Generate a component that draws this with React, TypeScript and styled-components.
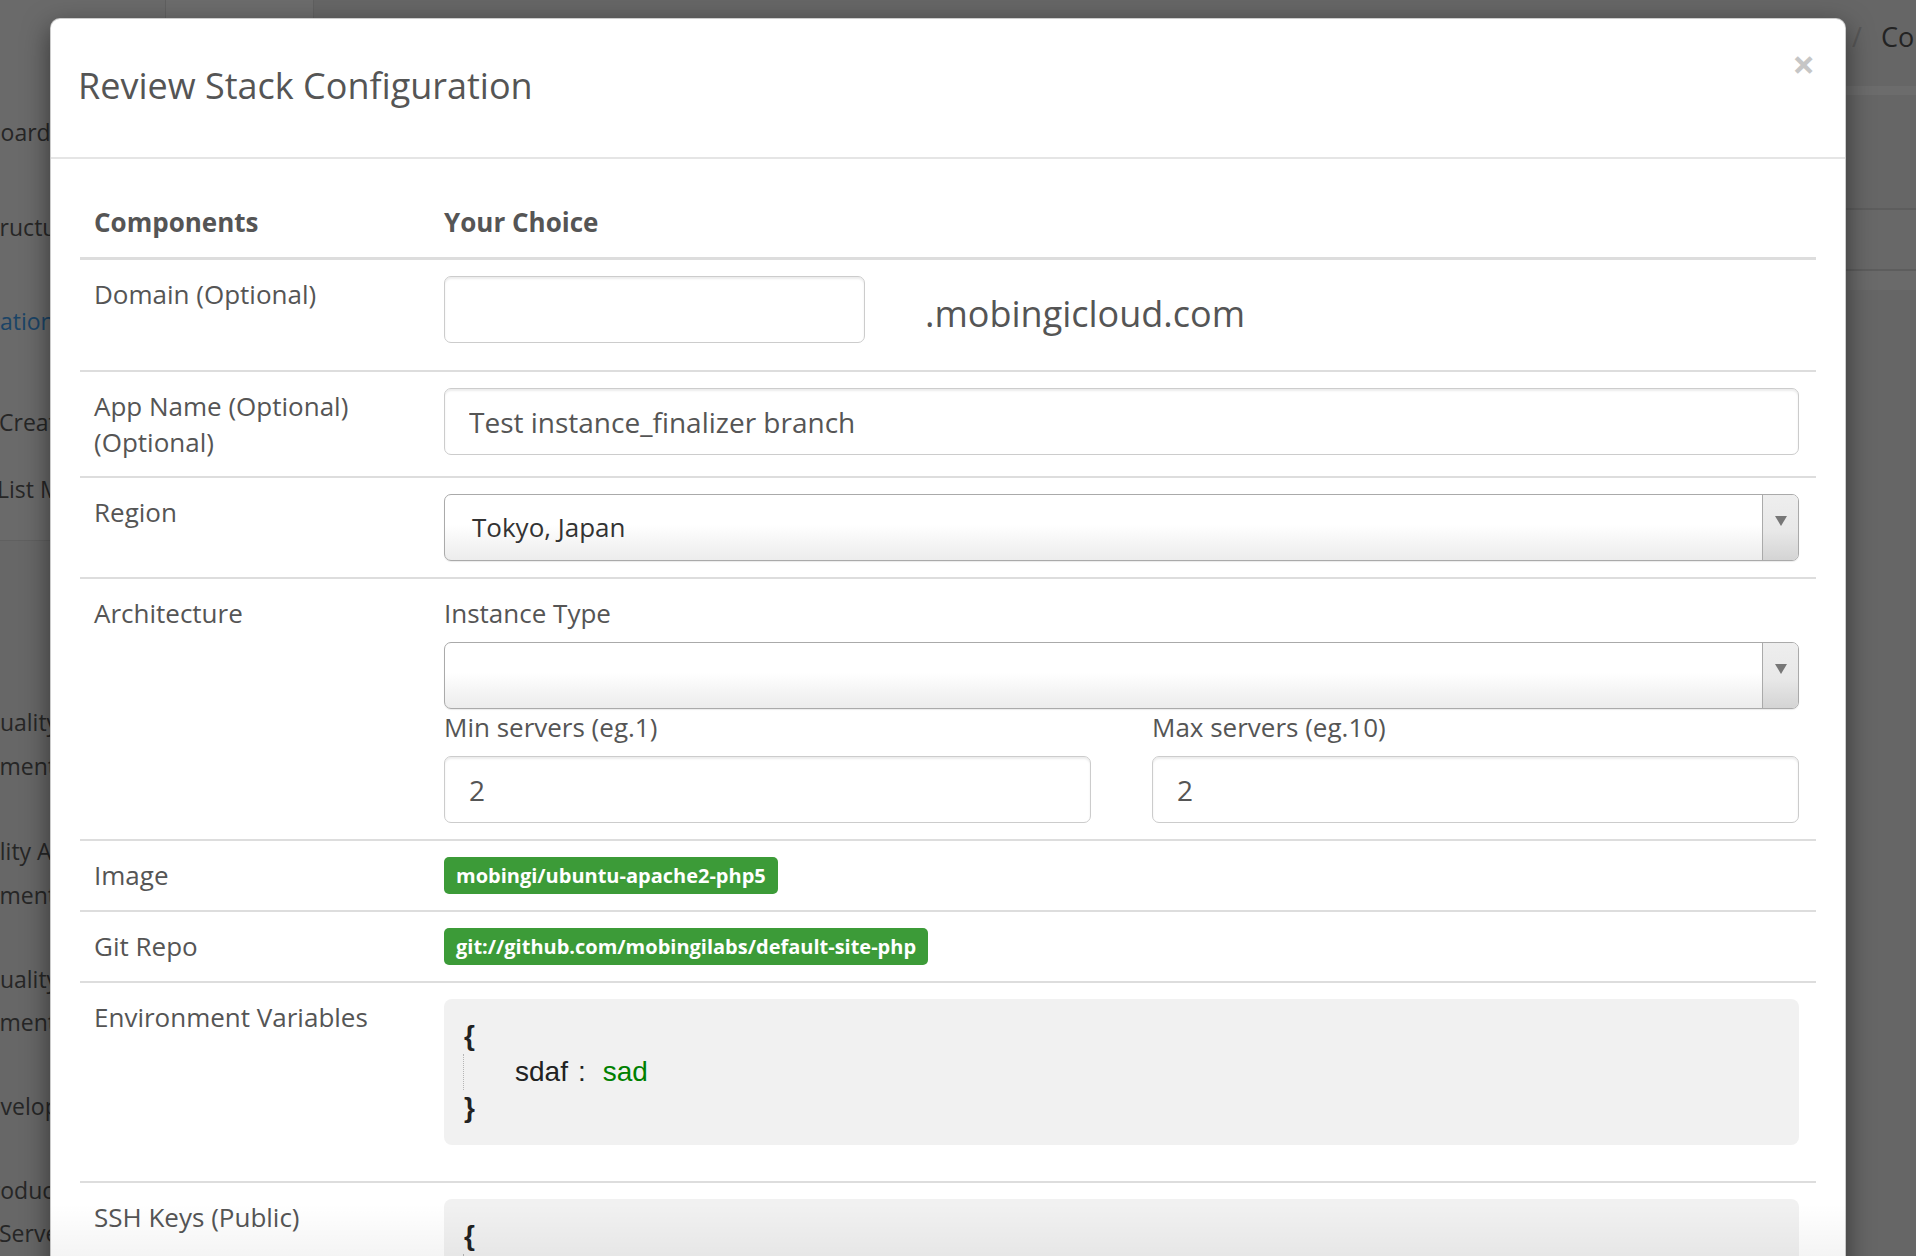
import React from "react";
import styled, { createGlobalStyle } from "styled-components";

const GlobalStyle = createGlobalStyle`
  html, body {
    margin: 0;
    padding: 0;
  }
  body {
    width: 1916px;
    height: 1256px;
    overflow: hidden;
    background: #666;
    font-family: "Open Sans", "Liberation Sans", sans-serif;
  }
  * {
    box-sizing: border-box;
  }
`;

// ---- page behind the backdrop ----

const Page = styled.div`
  position: relative;
  width: 1916px;
  height: 1256px;
  overflow: hidden;
  display: flex;
  flex-direction: column;
  background: #666;
`;

const TopBar = styled.header`
  display: flex;
  height: 86px;
  flex-shrink: 0;
`;

const Brand = styled.div`
  width: 166px;
  background: #6a6a6a;
  border-right: 1px solid #606060;
`;

const TopTab = styled.div`
  width: 148px;
  background: #6c6c6c;
  border-right: 1px solid #606060;
`;

const Crumbs = styled.div`
  margin-left: auto;
  width: 64px;
  white-space: nowrap;
  overflow: hidden;
  font-size: 27px;
  line-height: 38px;
  padding-top: 18px;
  color: #232323;
`;

const CrumbSep = styled.span`
  color: #575757;
  margin-right: 19px;
`;

const Shell = styled.div`
  display: flex;
  flex: 1;
`;

const Sidebar = styled.nav`
  width: 166px;
  display: flex;
  flex-direction: column;
  overflow: hidden;
`;

const NavGroup = styled.div<{ $h?: number; $bg: string }>`
  display: flex;
  flex-direction: column;
  height: ${(p) => (p.$h ? `${p.$h}px` : "auto")};
  flex: ${(p) => (p.$h ? "none" : 1)};
  background: ${(p) => p.$bg};
  border-bottom: ${(p) => (p.$h ? "1px solid #606060" : "none")};
`;

const NavLine = styled.div<{ $gap: number; $shift: number; $active?: boolean }>`
  margin-top: ${(p) => p.$gap}px;
  margin-left: ${(p) => p.$shift}px;
  white-space: nowrap;
  font-size: 23px;
  line-height: 36px;
  color: ${(p) => (p.$active ? "#1b4466" : "#262626")};
`;

const Main = styled.main`
  flex: 1;
  display: flex;
  flex-direction: column;
`;

const SubBar = styled.div`
  height: 9px;
  background: #6c6c6c;
`;

const MainGap = styled.div`
  height: 113px;
`;

const PanelHead = styled.div`
  height: 63px;
  border-top: 2px solid #5d5d5d;
  border-bottom: 2px solid #5d5d5d;
  background: #686868;
`;

const PanelStrip = styled.div`
  height: 19px;
  background: #6a6a6a;
`;

// ---- modal ----

const ModalLayer = styled.div`
  position: absolute;
  inset: 0;
  padding: 18px 70px 0 50px;
  overflow: hidden;
`;

const Modal = styled.div`
  background: #fff;
  border: 1px solid rgba(0, 0, 0, 0.2);
  border-radius: 10px;
  box-shadow: 0 9px 27px rgba(0, 0, 0, 0.5);
`;

const Header = styled.div`
  display: flex;
  align-items: flex-start;
  justify-content: space-between;
  padding: 42px 30px 46px 27px;
  border-bottom: 2px solid #e5e5e5;
`;

const Title = styled.h4`
  margin: 0;
  font-size: 36px;
  font-weight: 400;
  line-height: 50px;
  color: #555;
`;

const Close = styled.button`
  margin-top: -17px;
  padding: 0;
  border: 0;
  background: none;
  font-family: "Open Sans", sans-serif;
  font-size: 40px;
  font-weight: 700;
  line-height: 40px;
  color: #c6c6c6;
  cursor: pointer;
`;

const Body = styled.div`
  padding: 31px 29px 0 29px;
`;

const Table = styled.table`
  width: 100%;
  border-collapse: collapse;
  table-layout: fixed;
`;

const Th = styled.th<{ $w?: number }>`
  width: ${(p) => (p.$w ? `${p.$w}px` : "auto")};
  text-align: left;
  font-size: 26px;
  font-weight: 700;
  line-height: 36px;
  color: #555;
  padding: 14px 17px 17px 14px;
  border-bottom: 3px solid #ddd;
  vertical-align: bottom;
`;

const Td = styled.td`
  padding: 16px 17px 16px 14px;
  border-top: 2px solid #ddd;
  vertical-align: top;
  font-size: 26px;
  line-height: 36px;
  color: #555;
`;

const DomainRow = styled.div`
  display: flex;
  align-items: flex-start;
  gap: 60px;
  height: 78px;
`;

const DomainSuffix = styled.span`
  margin-top: 19px;
  font-size: 36px;
  line-height: 38px;
  color: #555;
`;

const TextInput = styled.input<{ $w?: number }>`
  display: block;
  width: ${(p) => (p.$w ? `${p.$w}px` : "100%")};
  height: 67px;
  padding: 0 24px;
  border: 1.5px solid #ccc;
  border-radius: 7px;
  box-shadow: inset 0 2px 2px rgba(0, 0, 0, 0.075);
  background: #fff;
  font-family: "Open Sans", sans-serif;
  font-size: 28px;
  color: #555;
  outline: none;
`;

const Select = styled.div`
  display: flex;
  height: 67px;
  border: 1.5px solid #aaa;
  border-radius: 7px;
  overflow: hidden;
  background: linear-gradient(to bottom, #fff 0%, #fff 45%, #ececec 100%);
  box-shadow: 0 1px 1px rgba(0, 0, 0, 0.08);
`;

const SelectValue = styled.span`
  flex: 1;
  padding-left: 27px;
  font-size: 26px;
  line-height: 64px;
  color: #333;
`;

const SelectArrow = styled.span`
  width: 36px;
  display: flex;
  justify-content: center;
  padding-top: 21px;
  border-left: 1.5px solid #aaa;
  background: linear-gradient(to bottom, #eee 0%, #e8e8e8 55%, #d4d4d4 100%);

  &::after {
    content: "";
    width: 0;
    height: 0;
    border-top: 10px solid #777;
    border-left: 6px solid transparent;
    border-right: 6px solid transparent;
  }
`;

const FieldLabel = styled.div`
  font-size: 26px;
  line-height: 36px;
  color: #555;
  margin-bottom: 11px;
`;

const ServerGrid = styled.div`
  display: grid;
  grid-template-columns: 1fr 1fr;
  column-gap: 61px;
`;

const Tag = styled.span`
  display: inline-block;
  vertical-align: top;
  padding: 6px 12px;
  border-radius: 5px;
  background: #3c9b38;
  color: #fff;
  font-size: 20px;
  font-weight: 700;
  line-height: 25px;
`;

const JsonBox = styled.div`
  background: #f1f1f1;
  border-radius: 8px;
  padding: 19px 20px;
  margin-bottom: 20px;
  font-family: "Liberation Sans", Arial, sans-serif;
  font-size: 28px;
  line-height: 36px;
  color: #222;
`;

const Brace = styled.div`
  font-weight: 700;
`;

const JsonEntries = styled.div`
  margin-left: -1px;
  padding-left: 51px;
  border-left: 1px dotted #b5b5b5;
`;

const JsonColon = styled.span`
  margin: 0 17px 0 10px;
`;

const JsonValue = styled.span`
  color: #008000;
`;

const BottomFade = styled.div`
  position: absolute;
  left: 50px;
  right: 70px;
  bottom: 0;
  height: 52px;
  background: linear-gradient(to bottom, rgba(0, 0, 0, 0), rgba(0, 0, 0, 0.045));
  pointer-events: none;
`;

const navTop = [
  { text: "Dashboard", gap: 28, shift: -68 },
  { text: "Infrastructure", gap: 59, shift: -70 },
  { text: "Configuration", gap: 58, shift: -92, active: true },
  { text: "Create Stack", gap: 65, shift: -1 },
  { text: "List Machines", gap: 31, shift: -3 },
];

const navBottom = [
  { text: "Quality Assurance", gap: 163, shift: -18 },
  { text: "Environment", gap: 8, shift: -82 },
  { text: "Quality Assurance", gap: 49, shift: -45 },
  { text: "Environment", gap: 8, shift: -82 },
  { text: "Quality Assurance", gap: 48, shift: -18 },
  { text: "Environment", gap: 7, shift: -82 },
  { text: "Development", gap: 48, shift: -29 },
  { text: "Production", gap: 48, shift: -23 },
  { text: "Server", gap: 7, shift: -1 },
];

type Entry = { key: string; value: string };

const JsonView = ({ entries }: { entries: Entry[] }) => (
  <JsonBox>
    <Brace>{"{"}</Brace>
    <JsonEntries>
      {entries.map((e) => (
        <div key={e.key}>
          {e.key}
          <JsonColon>:</JsonColon>
          <JsonValue>{e.value}</JsonValue>
        </div>
      ))}
    </JsonEntries>
    <Brace>{"}"}</Brace>
  </JsonBox>
);

const App = () => {
  return (
    <>
      <GlobalStyle />
      <Page>
        <TopBar>
          <Brand />
          <TopTab />
          <Crumbs>
            <CrumbSep>/</CrumbSep>Configuration
          </Crumbs>
        </TopBar>
        <Shell>
          <Sidebar>
            <NavGroup $h={455} $bg="#6a6a6a">
              {navTop.map((n) => (
                <NavLine key={n.text} $gap={n.gap} $shift={n.shift} $active={n.active}>
                  {n.text}
                </NavLine>
              ))}
            </NavGroup>
            <NavGroup $bg="#676767">
              {navBottom.map((n, i) => (
                <NavLine key={i} $gap={n.gap} $shift={n.shift}>
                  {n.text}
                </NavLine>
              ))}
            </NavGroup>
          </Sidebar>
          <Main>
            <SubBar />
            <MainGap />
            <PanelHead />
            <PanelStrip />
          </Main>
        </Shell>

        <ModalLayer>
          <Modal>
            <Header>
              <Title>Review Stack Configuration</Title>
              <Close aria-label="Close">×</Close>
            </Header>
            <Body>
              <Table>
                <thead>
                  <tr>
                    <Th $w={350}>Components</Th>
                    <Th>Your Choice</Th>
                  </tr>
                </thead>
                <tbody>
                  <tr>
                    <Td>Domain (Optional)</Td>
                    <Td>
                      <DomainRow>
                        <TextInput $w={421} defaultValue="" />
                        <DomainSuffix>.mobingicloud.com</DomainSuffix>
                      </DomainRow>
                    </Td>
                  </tr>
                  <tr>
                    <Td>App Name (Optional) (Optional)</Td>
                    <Td>
                      <TextInput defaultValue="Test instance_finalizer branch" />
                    </Td>
                  </tr>
                  <tr>
                    <Td>Region</Td>
                    <Td>
                      <Select>
                        <SelectValue>Tokyo, Japan</SelectValue>
                        <SelectArrow />
                      </Select>
                    </Td>
                  </tr>
                  <tr>
                    <Td>Architecture</Td>
                    <Td>
                      <FieldLabel>Instance Type</FieldLabel>
                      <Select>
                        <SelectValue />
                        <SelectArrow />
                      </Select>
                      <ServerGrid>
                        <div>
                          <FieldLabel>Min servers (eg.1)</FieldLabel>
                          <TextInput defaultValue="2" />
                        </div>
                        <div>
                          <FieldLabel>Max servers (eg.10)</FieldLabel>
                          <TextInput defaultValue="2" />
                        </div>
                      </ServerGrid>
                    </Td>
                  </tr>
                  <tr>
                    <Td>Image</Td>
                    <Td>
                      <Tag>mobingi/ubuntu-apache2-php5</Tag>
                    </Td>
                  </tr>
                  <tr>
                    <Td>Git Repo</Td>
                    <Td>
                      <Tag>git://github.com/mobingilabs/default-site-php</Tag>
                    </Td>
                  </tr>
                  <tr>
                    <Td>Environment Variables</Td>
                    <Td>
                      <JsonView entries={[{ key: "sdaf", value: "sad" }]} />
                    </Td>
                  </tr>
                  <tr>
                    <Td>SSH Keys (Public)</Td>
                    <Td>
                      <JsonView entries={[{ key: "default", value: "ssh-rsa AAAAB3NzaC1yc2E" }]} />
                    </Td>
                  </tr>
                </tbody>
              </Table>
            </Body>
          </Modal>
          <BottomFade />
        </ModalLayer>
      </Page>
    </>
  );
};

export default App;
